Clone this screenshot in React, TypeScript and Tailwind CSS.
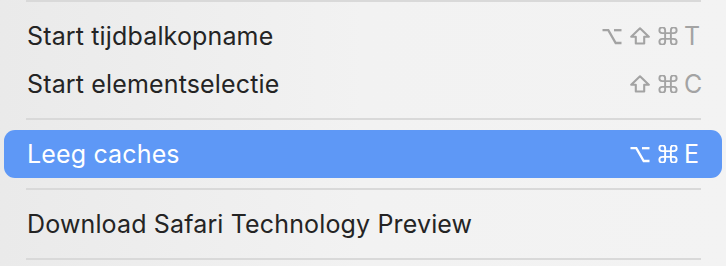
import React from "react";

type Mod = "opt" | "shift" | "cmd";

type Item = {
  label: string;
  mods: Mod[];
  keyChar: string;
  active?: boolean;
};

const font = { fontFamily: "Inter, 'Noto Sans', sans-serif" };

function ModGlyph({ kind }: { kind: Mod }) {
  if (kind === "opt") {
    return (
      <svg width="20" height="17" viewBox="0 0 20 17" fill="none" stroke="currentColor" strokeWidth="2.3" strokeLinejoin="miter">
        <path d="M0.5 2.2H6.3L13.7 15H19.5" />
        <path d="M12 2.2H19.5" />
      </svg>
    );
  }
  if (kind === "shift") {
    return (
      <svg width="20" height="18" viewBox="0 0 20 18" fill="none" stroke="currentColor" strokeWidth="2.1" strokeLinejoin="round">
        <path d="M10 1.3L18.8 9.8H14.2V16.5H5.8V9.8H1.2Z" />
      </svg>
    );
  }
  return (
    <svg width="20" height="18" viewBox="2.6 2.6 18.8 18.8" fill="none" stroke="currentColor" strokeWidth="2" strokeLinecap="round" strokeLinejoin="round">
      <path d="M15 6v12a3 3 0 1 0 3-3H6a3 3 0 1 0 3 3V6a3 3 0 1 0-3 3h12a3 3 0 1 0-3-3" />
    </svg>
  );
}

function Separator() {
  return <div className="mx-[26px] h-[2px] w-[675px] bg-[#d9d9d9]" />;
}

function MenuRow({ label, mods, keyChar, active }: Item) {
  return (
    <div
      className={
        "mx-[4px] flex h-[48px] items-center justify-between rounded-[11px] pl-[23px] pr-[18px] " +
        (active ? "bg-[#5e98f6] text-white" : "text-[#242424]")
      }
    >
      <span className="text-[25px] leading-none tracking-[0.15px]">{label}</span>
      <span className={"flex items-center " + (active ? "text-white" : "text-[#a3a3a3]")}>
        <span className="flex items-center gap-[8px]">
          {mods.map((m, i) => (
            <ModGlyph key={i} kind={m} />
          ))}
        </span>
        <span className="ml-[6px] w-[20px] text-[25px] leading-none">{keyChar}</span>
      </span>
    </div>
  );
}

export default function App() {
  return (
    <div
      className="h-[266px] w-[726px] overflow-hidden bg-gradient-to-r from-[#eaeaea] via-[#f2f2f2] to-[#f3f3f3]"
      style={font}
    >
      <div className="flex flex-col">
        <Separator />
        <div className="h-[10px]" />
        <MenuRow label="Start tijdbalkopname" mods={["opt", "shift", "cmd"]} keyChar="T" />
        <MenuRow label="Start elementselectie" mods={["shift", "cmd"]} keyChar="C" />
        <div className="h-[10px]" />
        <Separator />
        <div className="h-[10px]" />
        <MenuRow label="Leeg caches" mods={["opt", "cmd"]} keyChar="E" active />
        <div className="h-[10px]" />
        <Separator />
        <div className="h-[10px]" />
        <MenuRow label="Download Safari Technology Preview" mods={[]} keyChar="" />
        <div className="h-[10px]" />
        <Separator />
      </div>
    </div>
  );
}
